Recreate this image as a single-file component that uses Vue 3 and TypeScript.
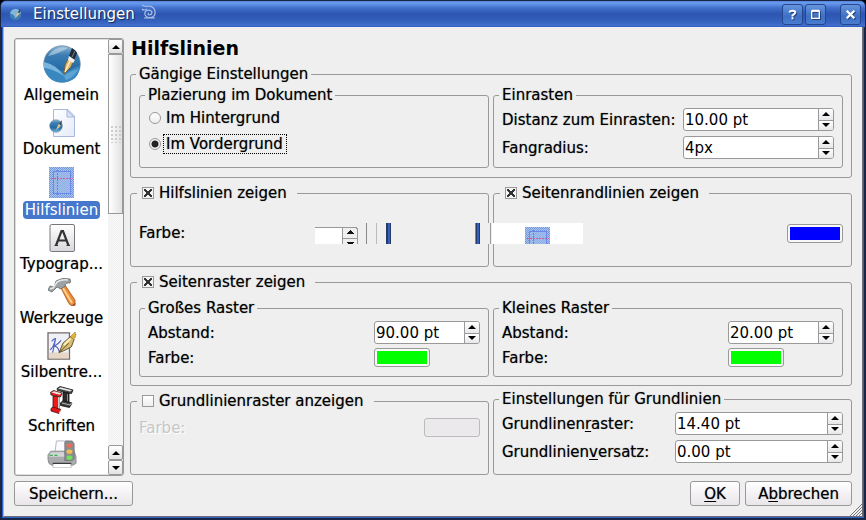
<script setup lang="ts">
import { ref } from 'vue'

const entries = ref([
  { id: 'allgemein', label: 'Allgemein' },
  { id: 'dokument', label: 'Dokument' },
  { id: 'hilfslinien', label: 'Hilfslinien' },
  { id: 'typographie', label: 'Typograp...' },
  { id: 'werkzeuge', label: 'Werkzeuge' },
  { id: 'silben', label: 'Silbentre...' },
  { id: 'schriften', label: 'Schriften' },
  { id: 'drucker', label: '' },
])
const current = ref('hilfslinien')
const placement = ref('vorne')
const showGuides = ref(true)
const showMargins = ref(true)
const showGrid = ref(true)
const showBaseline = ref(false)

const snap = ref([
  { id: 'distanz', label: 'Distanz zum Einrasten:', value: '10.00 pt' },
  { id: 'radius', label: 'Fangradius:', value: '4px' },
])
const grids = ref([
  { id: 'gross', title: 'Großes Raster', value: '90.00 pt' },
  { id: 'klein', title: 'Kleines Raster', value: '20.00 pt' },
])
const baseline = ref([
  { id: 'raster', pre: 'Grundlinen', key: 'r', post: 'aster:', value: '14.40 pt' },
  { id: 'versatz', pre: 'Grundlinien', key: 'v', post: 'ersatz:', value: '0.00 pt' },
])
</script>

<template>
  <div class="window">
    <header class="titlebar">
      <svg class="appicon" viewBox="0 0 38 38">
        <circle cx="19" cy="19" r="17" fill="#3f7fb5" />
        <path d="M3 15Q15 18 19 30Q28 20 35 14Q31 3 19 2Q7 3 3 15z" fill="#82b7dc" />
        <path d="M20 27L23 16L33 4L29 19z" fill="#d9c08a" />
        <path d="M25 14L33 2L32 14z" fill="#263b50" />
      </svg>
      <span class="title">Einstellungen</span>
      <svg class="swirl" viewBox="0 0 16 16" fill="none" stroke="#a9bfe6" stroke-width="1.2">
        <path d="M1 1Q4 3 9 2Q15 4 14 10Q12 15 6 13Q2 10 5 7Q9 5 11 8Q11 11 8 11Q6 10 8 9M1 5Q3 7 6 5M3 14H14" />
      </svg>
      <div class="winbtns">
        <button type="button" class="winbtn">
          <svg viewBox="0 0 20 20" fill="none" stroke="#fff" stroke-width="2"><path d="M7 8Q7 6 10 6Q13 6 13 8Q13 9 10 11V12M10 13V15" /></svg>
        </button>
        <button type="button" class="winbtn">
          <svg viewBox="0 0 20 20" fill="none" stroke="#fff"><path d="M6 6.5H14V14H6z" stroke-width="1.4" /><path d="M6 6H14" stroke-width="2" /></svg>
        </button>
        <button type="button" class="winbtn close">
          <svg viewBox="0 0 20 20" fill="none" stroke="#fff" stroke-width="2.4"><path d="M6 6L14 14M14 6L6 14" /></svg>
        </button>
      </div>
    </header>

    <svg class="defs" width="0" height="0">
      <defs>
        <linearGradient id="globe" x1="0" y1="0" x2="0" y2="1">
          <stop offset="0" stop-color="#8fb8d6" /><stop offset=".25" stop-color="#3d7fb4" />
          <stop offset=".65" stop-color="#226aa6" /><stop offset="1" stop-color="#7cc0e4" />
        </linearGradient>
        <linearGradient id="page" x1="0" y1="0" x2="1" y2="1">
          <stop offset="0" stop-color="#fff" /><stop offset="1" stop-color="#e4ebf8" />
        </linearGradient>
        <linearGradient id="key" x1="0" y1="0" x2="0" y2="1">
          <stop offset="0" stop-color="#fff" /><stop offset="1" stop-color="#d9d7db" />
        </linearGradient>
        <pattern id="dither" width="2" height="2" patternUnits="userSpaceOnUse">
          <rect width="2" height="2" fill="#a9c3ee" /><rect width="1" height="1" fill="#6f99dc" /><rect x="1" y="1" width="1" height="1" fill="#6f99dc" />
        </pattern>
        <symbol id="guides" viewBox="0 0 25 31">
          <rect width="25" height="31" fill="url(#dither)" />
          <rect x="4.5" y="4.5" width="17" height="22" fill="#a3bdec" fill-opacity=".6" stroke="#6c86ee" />
          <path d="M0 2.500H25M2.500 0V31M0 28.500H25" stroke="#7d9fe4" stroke-dasharray="1 1" />
          <path d="M8.500 3V28M2 11.500H24" stroke="#c0609a" stroke-dasharray="2 1" />
        </symbol>
      </defs>
    </svg>

    <div class="body">
      <div class="content">
        <nav class="list">
          <ul>
            <li v-for="e in entries" :key="e.id">
              <button type="button" class="entry" :class="{ active: e.id === current }" @click="current = e.id">
                <svg v-if="e.id === 'allgemein'" class="icon big" viewBox="0 0 38 38">
                  <circle cx="19" cy="19" r="18.3" fill="url(#globe)" stroke="#75899a" stroke-width=".7" />
                  <path d="M1 17Q14 20 21 31Q28 23 36 21Q37 31 29 35Q19 40 9 35Q0 29 1 17z" fill="#3a88c0" />
                  <path d="M1 17Q14 20 21 31Q8 23 1 23z" fill="#8ec3e5" opacity=".75" />
                  <path d="M21 31Q26 26 36 24Q29 34 23 35z" fill="#6cb0da" opacity=".7" />
                  <path d="M5 11Q13 0 25 3Q17 8 5 11z" fill="#c5dae8" opacity=".6" />
                  <path d="M21 29L22 20L25 14L30 17L28 22z" fill="#d9b471" stroke="#74532c" stroke-width=".8" />
                  <path d="M22 27L27 16" stroke="#fff0b8" stroke-width="1.500" />
                  <path d="M26 11L29 3L33 6L34 8L31 16z" fill="#202b36" /><path d="M26 11L32 15L30 18L25 15z" fill="#f3f0e8" />
                  <path d="M29 12L32 6" stroke="#788795" />
                </svg>
                <svg v-else-if="e.id === 'dokument'" class="icon" viewBox="0 0 28 28">
                  <path d="M5.500.5H20L26.500 7V27.500H5.500z" fill="url(#page)" stroke="#a9b8db" />
                  <path d="M19 1V8H26z" fill="#d8e2f5" stroke="#a9b8db" />
                  <circle cx="8" cy="17" r="6.300" fill="url(#globe)" stroke="#627d96" stroke-width=".5" />
                  <path d="M8 21L10 16L14 12L12 18z" fill="#ddc18a" /><path d="M11 15L14 11L13 16z" fill="#27394c" />
                </svg>
                <svg v-else-if="e.id === 'hilfslinien'" class="icon guide" viewBox="0 0 25 31">
                  <use href="#guides" width="25" height="31" />
                </svg>
                <svg v-else-if="e.id === 'typographie'" class="icon" viewBox="0 0 28 28">
                  <rect x="2" y=".5" width="24.500" height="27" rx="1.500" fill="url(#key)" stroke="#78787c" />
                  <path d="M8 21.500L13.500 7H15L20.500 21.500M10 16.500H18.500" fill="none" stroke="#333" stroke-width="2.200" />
                  <path d="M6.500 21.500H10M18.500 21.500H22" stroke="#333" />
                </svg>
                <svg v-else-if="e.id === 'werkzeuge'" class="icon" viewBox="0 0 28 28">
                  <path d="M13 10L17 7L27 22Q28 26 25 28Q22 28 20 24z" fill="#e98a34" stroke="#9b501c" stroke-width=".7" />
                  <path d="M15 10L24 25" stroke="#ffd091" stroke-width="2" />
                  <path d="M24 27L28 25L27 28z" fill="#a44a35" />
                  <path d="M0 12L2 8L6 9L8 3Q14-1 22 1Q23 3 22 5Q18 4 17 8L13 11L9 9L4 14z" fill="#9da2a5" stroke="#626769" stroke-width=".8" />
                  <path d="M2 11L5 10L9 4Q14 1 20 2" fill="none" stroke="#e6e8e9" stroke-width="1.500" />
                </svg>
                <svg v-else-if="e.id === 'silben'" class="icon wide" viewBox="0 0 32 30">
                  <path d="M1 1H24V29H1z" fill="#eff0f8" stroke="#756b62" stroke-width="1.400" />
                  <path d="M2 22H23V28H2z" fill="#e8d7c4" />
                  <path d="M3 19Q7 17 9 7Q7 7 5 10M6 22L9 8M15 9Q12 13 8 15Q12 16 13 21L16 19" fill="none" stroke="#5263bb" stroke-width="1.200" />
                  <path d="M13 22L17 12L25 5L29 8L26 16L18 20z" fill="#d6bc76" stroke="#5d5027" stroke-width="1" />
                  <path d="M13 22L23 12" stroke="#51441f" /><path d="M18 14L25 7" stroke="#fff3bd" stroke-width="2" />
                  <path d="M25 5L30 0L31 3L29 8" fill="#e6b334" stroke="#5d5027" stroke-width=".7" stroke-dasharray="2 1" />
                </svg>
                <svg v-else-if="e.id === 'schriften'" class="icon" viewBox="0 0 28 28" stroke-linejoin="round">
                  <path d="M15 6L21 7V17L15 16z" fill="#2b2b2b" stroke="#111" stroke-width=".8" />
                  <path d="M19.500 8V17" stroke="#8a8a8a" />
                  <path d="M12.500 17L15 14.500L24 17L21.500 21.500L12.500 19.500z" fill="#3a3a3a" stroke="#111" stroke-width=".8" />
                  <path d="M14 17L22 19L23.500 17" fill="none" stroke="#ddd" stroke-width=".8" />
                  <path d="M9 2.500L12 .5L25 4L23.500 7.500L20 7L9.500 4.500z" fill="#444" stroke="#111" stroke-width=".8" />
                  <path d="M10 2.500L12.500 1.200L24 4.200L22 5.500z" fill="#e6e6e6" />
                  <path d="M5 10L11 11V24L5 22z" fill="#f01a1a" stroke="#4a1010" stroke-width=".8" />
                  <path d="M10.500 11V23" stroke="#ccc" />
                  <path d="M3 22.500L5 21L13 23.500L11 27.500L3 25z" fill="#e01616" stroke="#4a1010" stroke-width=".8" />
                  <path d="M11 27L13.500 23.500" stroke="#ddd" />
                  <path d="M2.500 6.500L5.500 4.500L14 7L12.500 11L3 9z" fill="#f01a1a" stroke="#222" stroke-width=".8" />
                  <path d="M3.500 6.500L6 5.200L13.500 7.200L11.500 8.700z" fill="#e6e6e6" />
                </svg>
                <svg v-else class="icon wide" viewBox="0 0 32 30">
                  <path d="M10 1H22L24 17H8z" fill="#fbfbff" stroke="#b3b3c0" />
                  <path d="M4 12H29L31 18V25Q28 28 24 27H5Q1 26 1 21V16z" fill="#a9abad" stroke="#8b8d8f" />
                  <path d="M4 13H18L20 18H2z" fill="#d2d4d5" /><path d="M3 16.500H6M8 16.500H11" stroke="#2fb04a" stroke-width="1.500" />
                  <path d="M7 25H25L26 29.500H6z" fill="#fff" stroke="#aaa" stroke-width=".6" /><path d="M6 25H26" stroke="#3c3c3c" stroke-width="1.300" />
                  <path d="M19 2L21 1H27L29 4V20L27 22H19z" fill="#8b8d91" stroke="#6c6e72" stroke-width=".8" />
                  <ellipse cx="24" cy="6" rx="3.200" ry="2.300" fill="#ef6a55" /><ellipse cx="24" cy="12.500" rx="3.200" ry="2.300" fill="#f2bd4c" /><ellipse cx="24" cy="19" rx="3.200" ry="2.300" fill="#6be45a" />
                </svg>
                <span v-if="e.label" class="caption">{{ e.label }}</span>
              </button>
            </li>
          </ul>
          <div class="scroll">
            <button type="button" class="sbtn"><i class="up"></i></button>
            <div class="thumb"><i class="grip"></i></div>
            <div class="track"></div>
            <button type="button" class="sbtn"><i class="up"></i></button>
            <button type="button" class="sbtn"><i class="down"></i></button>
          </div>
        </nav>

        <main class="main">
          <h1>Hilfslinien</h1>

          <fieldset class="common">
            <legend>Gängige Einstellungen</legend>
            <div class="pair">
              <fieldset>
                <legend>Plazierung im Dokument</legend>
                <div class="radios">
                  <div class="opt"><input id="hinten" v-model="placement" type="radio" name="placement" value="hinten" /><label for="hinten">Im Hintergrund</label></div>
                  <div class="opt"><input id="vorne" v-model="placement" type="radio" name="placement" value="vorne" /><label for="vorne" class="focus">Im Vordergrund</label></div>
                </div>
              </fieldset>
              <fieldset>
                <legend>Einrasten</legend>
                <div class="form snap">
                  <template v-for="s in snap" :key="s.id">
                    <label :for="s.id">{{ s.label }}</label>
                    <div class="spin">
                      <input :id="s.id" v-model="s.value" type="text" />
                      <div class="arrows"><button type="button"><i class="up"></i></button><button type="button"><i class="down"></i></button></div>
                    </div>
                  </template>
                </div>
              </fieldset>
            </div>
          </fieldset>

          <div class="pair lines">
            <fieldset>
              <legend class="check"><input id="guidesOn" v-model="showGuides" type="checkbox" /><label for="guidesOn">Hilfslinien zeigen</label></legend>
              <div class="colorrow"><span>Farbe:</span></div>
            </fieldset>
            <fieldset>
              <legend class="check"><input id="marginsOn" v-model="showMargins" type="checkbox" /><label for="marginsOn">Seitenrandlinien zeigen</label></legend>
              <div class="colorrow end"><button type="button" class="color blue"><i></i></button></div>
            </fieldset>
            <svg class="residue" viewBox="0 0 268 21" width="268" height="21" shape-rendering="crispEdges">
              <rect width="268" height="21" fill="#efefef" />
              <rect y="4" width="28" height="17" fill="#fff" /><path d="M0 4.500H41L42.500 6V21M27.500 4V21M28 15.500H42" fill="none" stroke="#999" />
              <path d="M31 11L35 7L39 11zM31 19H39L37 21H33z" fill="#111" />
              <path d="M51.500 0V21" stroke="#888" /><path d="M61.500 0V21" stroke="#bbb" />
              <rect x="71" width="5" height="21" fill="#26395f" /><rect x="73" width="2" height="21" fill="#315fc2" />
              <rect x="160" width="5" height="21" fill="#26395f" /><rect x="162" width="2" height="21" fill="#315fc2" /><rect x="160" width="1" height="21" fill="#888" />
              <rect x="175" width="1" height="21" fill="#999" /><rect x="177" width="91" height="21" fill="#fff" />
              <svg x="210" y="4" width="25" height="17" viewBox="0 0 25 17"><use href="#guides" width="25" height="31" /></svg>
            </svg>
          </div>

          <fieldset class="gridbox">
            <legend class="check"><input id="gridOn" v-model="showGrid" type="checkbox" /><label for="gridOn">Seitenraster zeigen</label></legend>
            <div class="pair">
              <fieldset v-for="g in grids" :key="g.id">
                <legend>{{ g.title }}</legend>
                <div class="form grid">
                  <label :for="g.id">Abstand:</label>
                  <div class="spin">
                    <input :id="g.id" v-model="g.value" type="text" />
                    <div class="arrows"><button type="button"><i class="up"></i></button><button type="button"><i class="down"></i></button></div>
                  </div>
                  <label :for="g.id + 'Farbe'">Farbe:</label>
                  <button :id="g.id + 'Farbe'" type="button" class="color green"><i></i></button>
                </div>
              </fieldset>
            </div>
          </fieldset>

          <div class="pair base">
            <fieldset>
              <legend class="check"><input id="baseOn" v-model="showBaseline" type="checkbox" /><label for="baseOn">Grundlinienraster anzeigen</label></legend>
              <div class="colorrow off"><label for="baseFarbe">Farbe:</label><button id="baseFarbe" type="button" class="color" disabled></button></div>
            </fieldset>
            <fieldset>
              <legend>Einstellungen für Grundlinien</legend>
              <div class="form baseline">
                <template v-for="b in baseline" :key="b.id">
                  <label :for="b.id">{{ b.pre }}<u>{{ b.key }}</u>{{ b.post }}</label>
                  <div class="spin">
                    <input :id="b.id" v-model="b.value" type="text" />
                    <div class="arrows"><button type="button"><i class="up"></i></button><button type="button"><i class="down"></i></button></div>
                  </div>
                </template>
              </div>
            </fieldset>
          </div>
        </main>
      </div>

      <footer class="footer">
        <button type="button" class="push save">Speichern...</button>
        <button type="button" class="push ok"><u>O</u>K</button>
        <button type="button" class="push cancel">A<u>b</u>brechen</button>
      </footer>
      <svg class="resize" viewBox="0 0 12 12" stroke="#777" fill="none"><path d="M0 12L12 0M3 12L12 3M6 12L12 6M9 12L12 9" /></svg>
    </div>
  </div>
</template>

<style>
body { background: #000; }
</style>

<style scoped>
* { box-sizing: border-box; }
.window {
  min-height: 100vh; display: flex; flex-direction: column;
  padding: 1px; background: #182544; border-radius: 6px 6px 0 0;
  font: 15px/16px "DejaVu Sans", Verdana, sans-serif; color: #000;
}
button, input { font: inherit; color: inherit; margin: 0; }
button { padding: 0; }
legend, label, .caption, .push, .colorrow span { text-shadow: 0 0 1px rgba(0, 0, 0, .5); }
.titlebar {
  height: 26px; flex: none; display: flex; align-items: center; padding: 0 4px 0 8px;
  border-radius: 5px 5px 0 0;
  background: linear-gradient(#5683d8 0, #6a9cf0 2px, #406fcb 7px, #2c56b0 13px, #3460bd 20px, #4672d0 26px);
}
.appicon { width: 13px; height: 13px; }
.title { margin-left: 11px; color: #fff; text-shadow: 1px 1px 1px #14264f; }
.swirl { width: 16px; height: 16px; margin-left: 6px; margin-bottom: 4px; }
.winbtns { margin-left: auto; display: flex; gap: 2px; }
.winbtn {
  width: 21px; height: 21px; border: 1px solid #24468e; border-radius: 3px;
  background: linear-gradient(#6795dd, #3d6fc4 60%, #4a7dd0);
}
.winbtn svg { display: block; width: 19px; height: 19px; filter: drop-shadow(1px 1px 0 #23427f); }
.close { margin-left: 12px; }
.defs { position: absolute; }
.body {
  flex: 1; display: flex; flex-direction: column; position: relative;
  margin: 0 2px 2px; background: #efefef; padding: 11px 10px 10px;
  border: 1px solid #6b6f7b; border-top: 0; border-left-color: #a9b4cc; outline: 1px solid #315fc2;
}
.content { flex: 1; display: flex; gap: 6px; }

.list {
  contain: size; width: 110px; flex: none; display: flex; overflow: hidden;
  border: 1px solid #999; border-radius: 3px; background: #fff; box-shadow: inset 0 0 0 1px #ddd;
}
.list ul { flex: 1; min-width: 0; list-style: none; margin: 0; padding: 6px 0 0; display: flex; flex-direction: column; gap: 5px; }
.entry { display: flex; flex-direction: column; align-items: center; gap: 3px; width: 100%; border: 0; background: none; }
.icon { display: block; width: 28px; height: 28px; }
.icon.wide { width: 32px; }
.icon.big { width: 38px; height: 38px; }
.icon.guide { width: 25px; height: 35px; padding-top: 4px; }
.caption { line-height: 18px; padding: 0 2px; border-radius: 4px; white-space: nowrap; }
.active .caption { background: #4577cd; color: #fff; text-shadow: none; }
.scroll { width: 15px; flex: none; display: flex; flex-direction: column; }
.sbtn { height: 15px; display: grid; place-items: center; border: 1px solid #999; border-radius: 2px; background: linear-gradient(#fff, #e4e2e5); }
.thumb { height: 160px; display: grid; place-items: center; border: 1px solid #999; background: linear-gradient(90deg, #fff, #e2e0e3); }
.grip { width: 10px; height: 17px; background: radial-gradient(circle at 1px 1px, #ccc 1px, transparent 1px) 0 0 / 4px 4px; }
.track { flex: 1; background: repeating-conic-gradient(#fafafa 0 25%, #eee 0 50%) 0 0 / 2px 2px; }

.up, .down { display: block; width: 0; height: 0; border: 4px solid transparent; border-top-width: 0; border-bottom: 4px solid #000; }
.down { border-bottom: 0; border-top: 4px solid #000; }

.main { flex: 1; min-width: 0; display: flex; flex-direction: column; }
h1 { margin: 0 0 8px 1px; font-size: 19px; line-height: 20px; font-weight: 700; }
fieldset { min-width: 0; margin: 0; padding: 0 8px; border: 1px solid #999; border-radius: 3px; }
legend { margin-left: -3px; padding: 0 3px; white-space: nowrap; }
legend.check { margin-left: -2px; padding: 0 10px 0 5px; height: 20px; display: flex; align-items: center; gap: 5px; }
.pair { display: grid; grid-template-columns: 1fr 1fr; gap: 4px; }
.lines, .gridbox, .base { margin-top: 5px; }
.common { padding-top: 5px; padding-bottom: 9px; }
.gridbox { padding-top: 8px; padding-bottom: 8px; }
.lines { position: relative; }
.residue { position: absolute; left: 185px; top: 40px; display: block; }

input[type="checkbox"], input[type="radio"] {
  appearance: none; width: 12px; height: 12px; flex: none; border: 1px solid #999; background: linear-gradient(#fff, #eee);
}
input[type="radio"] { border-radius: 50%; }
input[type="radio"]:checked { background: radial-gradient(circle, #222 0 3px, #f4f4f4 4px); }
input[type="checkbox"]:checked {
  background:
    linear-gradient(45deg, transparent 40%, #333 40% 60%, transparent 60%) center / 8px 8px no-repeat,
    linear-gradient(-45deg, transparent 40%, #333 40% 60%, transparent 60%) center / 8px 8px no-repeat, #f4f4f4;
}
.radios { display: grid; gap: 6px; padding: 5px 0 13px 1px; }
.opt { display: flex; align-items: center; gap: 2px; height: 20px; }
.opt label { padding: 0 3px 0 2px; line-height: 18px; border: 1px solid transparent; }
.opt .focus { border: 1px dotted #000; }

.form { display: grid; align-items: center; white-space: nowrap; }
.snap { grid-template-columns: minmax(0, 181px) 1fr; gap: 5px 0; padding: 5px 0 8px; }
.grid { grid-template-columns: 1fr 106px; gap: 4px 0; padding: 5px 0 9px; }
.baseline { grid-template-columns: minmax(0, 173px) 1fr; gap: 5px 0; padding: 5px 0 11px; }
.spin { display: flex; height: 23px; min-width: 0; border: 1px solid #999; border-radius: 3px; background: #fff; overflow: hidden; }
.spin input { flex: 1; width: 0; min-width: 0; border: 0; padding: 0 1px; background: none; outline: 0; }
.arrows { width: 15px; display: grid; grid-template-rows: 1fr 1fr; border-left: 1px solid #999; }
.arrows button { display: grid; place-items: center; border: 0; background: linear-gradient(#fff, #e8e6e9); }
.arrows button + button { border-top: 1px solid #999; }

.colorrow { display: flex; justify-content: space-between; align-items: center; height: 63px; padding-bottom: 3px; }
.colorrow.end { justify-content: flex-end; }
.colorrow.off { height: 33px; color: #c6c6c6; padding-bottom: 0; }
.colorrow.off label { text-shadow: 1px 1px 0 #fff; }
.color { width: 56px; height: 19px; padding: 2px; border: 1px solid #999; border-radius: 3px; background: #f8f8f8; }
.color i { display: block; height: 13px; }
.blue i { background: #00f; }
.green i { background: #0f0; }
.color:disabled { background: #ece9ec; border-color: #bbb; }

.footer { display: flex; gap: 5px; margin-top: 5px; }
.push { height: 25px; min-width: 50px; padding: 0 12px; border: 1px solid #999; border-radius: 3px; background: linear-gradient(#fff, #f4f2f5 50%, #e8e6e9); }
.save { margin-right: auto; min-width: 119px; }
u { text-underline-offset: 2px; }
.resize { position: absolute; right: 0; bottom: 0; width: 12px; height: 12px; }
</style>
